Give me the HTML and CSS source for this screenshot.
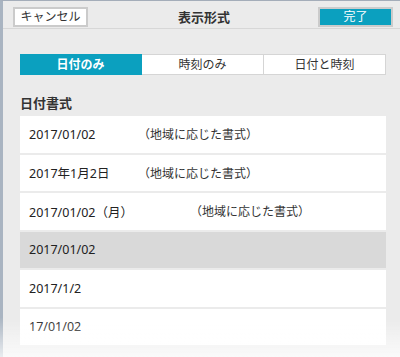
FILE: index.html
```html
<!DOCTYPE html>
<html lang="ja">
<head>
    <meta charset="UTF-8">
    <meta name="viewport" content="width=device-width, initial-scale=1.0">
    <title>表示形式</title>
    <link rel="stylesheet" href="styles.css">
</head>
<body>
<div class="header">
    <button class="btn">キャンセル</button>
    <div class="title">表示形式</div>
    <button class="btn primary">完了</button>
</div>

<div class="content">
    <div class="segments">
        <div class="seg active">日付のみ</div>
        <div class="seg">時刻のみ</div>
        <div class="seg">日付と時刻</div>
    </div>

    <div class="section-title">日付書式</div>

    <div class="list">
        <div class="row"><span class="date">2017/01/02</span><span class="note">（地域に応じた書式）</span></div>
        <div class="row"><span class="date">2017年1月2日</span><span class="note">（地域に応じた書式）</span></div>
        <div class="row"><span class="date wide">2017/01/02（月）</span><span class="note">（地域に応じた書式）</span></div>
        <div class="row selected"><span class="date">2017/01/02</span></div>
        <div class="row"><span class="date">2017/1/2</span></div>
        <div class="row"><span class="date">17/01/02</span></div>
    </div>
</div>
<div class="fade"></div>
</body>
</html>
```

FILE: styles.css
```css
html, body {
    margin: 0;
    height: 357px;
    overflow: hidden;
}

body {
    background-color: #ebebeb;
    border-left: 3px solid #a9b4c1;
    border-top: 1px solid #a4adb9;
    font-family: "Noto Sans", "Noto Sans CJK JP", sans-serif;
    color: #222;
    font-size: 13px;
}

.header {
    height: 28px;
    display: flex;
    align-items: flex-start;
    justify-content: space-between;
    padding: 6px 7px 0 10px;
    box-sizing: border-box;
    border-bottom: 1px solid #d7d7d7;
}

.btn {
    width: 75px;
    height: 20px;
    padding: 0;
    font-family: inherit;
    font-size: 12px;
    line-height: 16px;
    color: #333;
    background-color: #fff;
    border: 2px solid #cbcbcb;
}

.btn.primary {
    background-color: #0ba0bf;
    color: #fff;
}

.title {
    font-size: 13px;
    font-weight: bold;
    color: #333;
    line-height: 20px;
    padding-left: 2px;
}

.content {
    padding: 25px 14px 0 17px;
}

.segments {
    display: flex;
    height: 21px;
}

.seg {
    flex: 1;
    box-sizing: border-box;
    background-color: #fff;
    border: 1px solid #d5d5d5;
    border-left: none;
    font-size: 12px;
    line-height: 19px;
    text-align: center;
    color: #333;
}

.seg.active {
    background-color: #0ba0bf;
    border-color: #0ba0bf;
    color: #fff;
    font-weight: bold;
}

.section-title {
    margin: 18px 0 3px;
    font-size: 13px;
    font-weight: bold;
    line-height: 20px;
    color: #333;
}

.list {
    display: flex;
    flex-direction: column;
    gap: 2px;
}

.row {
    height: 36.5px;
    display: flex;
    align-items: center;
    padding-left: 9px;
    background-color: #fff;
    font-size: 12.5px;
}

.row.selected {
    background-color: #d9d9d9;
}

.date {
    width: 109px;
}

.date.wide {
    width: 161px;
}

.note {
    font-size: 12px;
    color: #333;
}

.fade {
    position: fixed;
    left: 0;
    right: 0;
    bottom: 0;
    height: 40px;
    background: linear-gradient(rgba(255, 255, 255, 0), rgba(255, 255, 255, 0.75));
}
```
